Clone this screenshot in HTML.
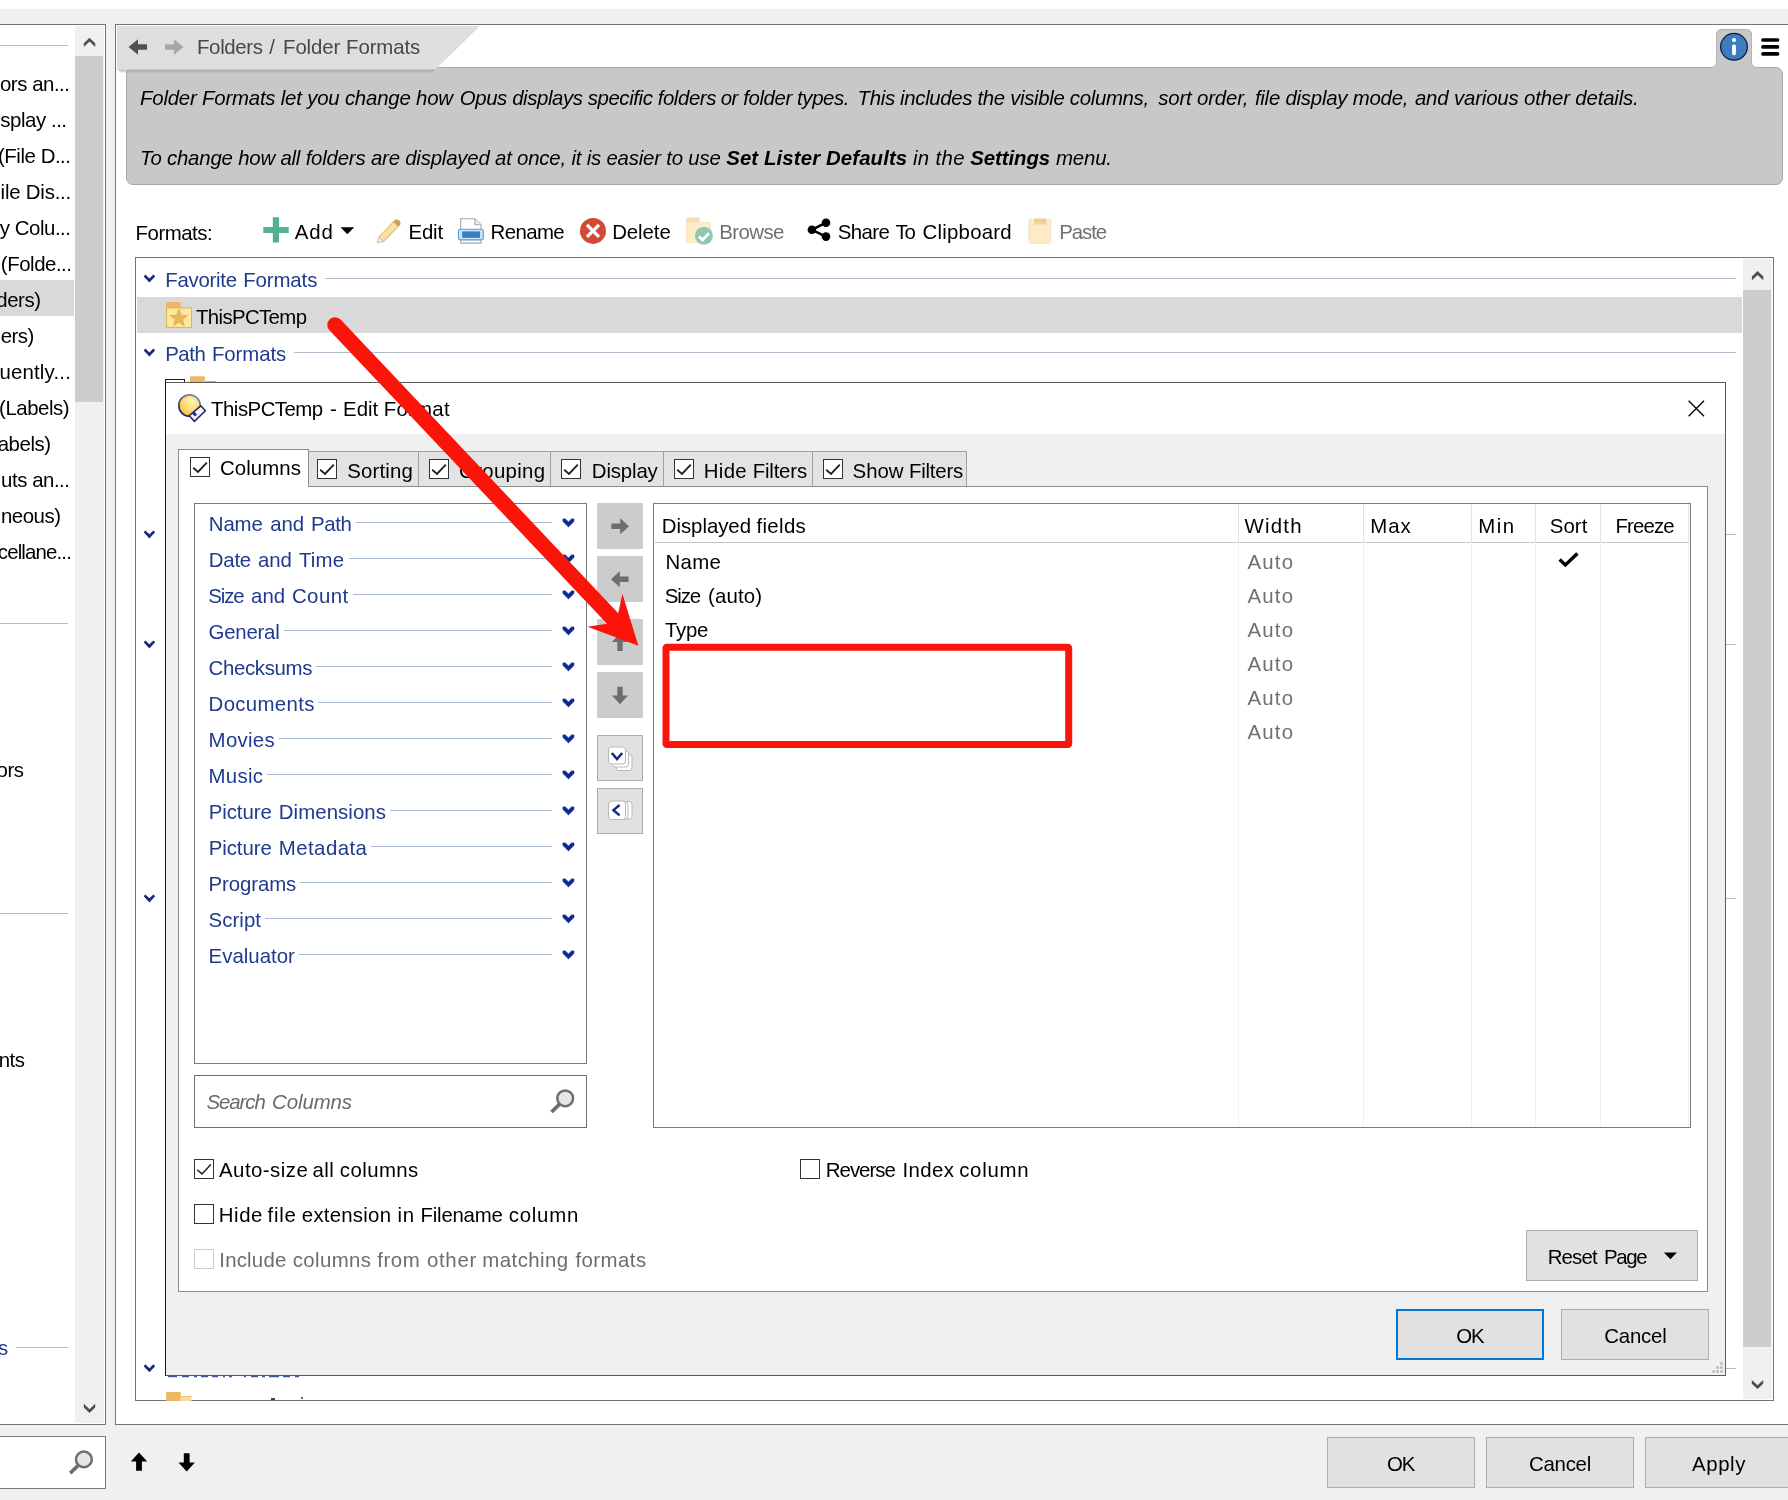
<!DOCTYPE html>
<html><head><meta charset="utf-8"><title>Folder Formats</title>
<style>
html,body{margin:0;padding:0;}
html{overflow:hidden;width:1788px;height:1500px;}
body{width:1788px;height:1500px;overflow:hidden;position:relative;background:#f0f0f0;font-family:"Liberation Sans",sans-serif;}
div,svg,span.t{position:absolute;box-sizing:border-box;}
span.t{white-space:pre;}
</style></head><body>
<div id="root" style="left:0;top:0;width:1788px;height:1500px;overflow:hidden;">
<div style="left:0px;top:0px;width:1788px;height:9px;background:#ffffff;"></div>
<div style="left:-2px;top:24px;width:108px;height:1401px;background:#ffffff;border:1px solid #747474;"></div>
<div style="left:75px;top:26px;width:29px;height:1397px;background:#f0f0f0;"></div>
<div style="left:75px;top:56px;width:28px;height:346px;background:#cdcdcd;"></div>
<div style="left:0px;top:280px;width:74px;height:36px;background:#d9d9d9;"></div>
<div style="left:0px;top:45px;width:68px;height:1px;background:#b4bccf;"></div>
<div style="left:0px;top:623px;width:68px;height:1px;background:#b4bccf;"></div>
<div style="left:0px;top:913px;width:68px;height:1px;background:#b4bccf;"></div>
<div style="left:16px;top:1347px;width:52px;height:1px;background:#b4bccf;"></div>
<svg style="left:75px;top:25px;" width="29" height="1399" viewBox="0 0 29 1399"><polygon points="14.50,12.80 20.20,18.20 20.20,22.00 14.50,16.60 8.80,22.00 8.80,18.20" fill="#4d4d4d"/><polygon points="14.50,1388.00 20.20,1382.60 20.20,1378.80 14.50,1384.20 8.80,1378.80 8.80,1382.60" fill="#4d4d4d"/></svg>
<div style="left:-2px;top:1436px;width:108px;height:53px;background:#ffffff;border:1px solid #7a7a7a;"></div>
<svg style="left:60px;top:1445px;" width="40" height="36" viewBox="0 0 40 36"><circle cx="23.9" cy="14.4" r="7.9" fill="#e6e6e6" stroke="#6e6e6e" stroke-width="2.5"/><path d="M18.1 20.5 L10.2 28.1" stroke="#6e6e6e" stroke-width="3.7"/></svg>
<div style="left:115px;top:24px;width:1700px;height:1401px;background:#ffffff;border:1px solid #747474;"></div>
<div style="left:126px;top:67px;width:1657px;height:118px;background:#c8c8c8;border:1px solid #a8a8a8;border-radius:7px;"></div>
<svg style="left:1700px;top:26px;" width="70" height="46" viewBox="0 0 70 46"><path d="M10.5 42 Q16 41.8 16 36.5 L16 9 Q16 3 22 3 L46 3 Q52 3 52 9 L52 36.5 Q52 41.8 57.5 42 L60 45 L8 45 Z" fill="#c8c8c8"/><path d="M10.5 41.5 Q16.5 41.6 16.5 36 L16.5 9 Q16.5 3.5 22 3.5 L46 3.5 Q51.5 3.5 51.5 9 L51.5 36 Q51.5 41.6 57.5 41.5" fill="none" stroke="#b4b4b4" stroke-width="1"/><circle cx="34" cy="20.8" r="13.4" fill="#3e7dbd" stroke="#0b1b3a" stroke-width="1.2"/><circle cx="34" cy="14" r="2.1" fill="#fff"/><rect x="32.1" y="18.6" width="3.8" height="10.6" rx="1.6" fill="#fff"/></svg>
<svg style="left:116px;top:25px;" width="380" height="52" viewBox="0 0 380 52"><defs><linearGradient id="tsh" x1="0" y1="0" x2="0" y2="1"><stop offset="0" stop-color="#9a9a9a" stop-opacity="0.75"/><stop offset="1" stop-color="#9a9a9a" stop-opacity="0"/></linearGradient></defs><polygon points="1,44.5 319.5,44.5 316,48.5 6,48.5" fill="url(#tsh)"/><polygon points="1,1 364,1 319.5,44.5 1,44.5" fill="#dedede"/><path d="M12.5 22 L22 14.2 L22 19.2 L31 19.2 L31 24.8 L22 24.8 L22 29.8 Z" fill="#505050"/><path d="M67.5 22 L58 14.2 L58 19.2 L49 19.2 L49 24.8 L58 24.8 L58 29.8 Z" fill="#a6a6a6"/></svg>
<svg style="left:1758px;top:34px;" width="26" height="26" viewBox="0 0 26 26"><g stroke="#000" stroke-width="3.7" stroke-linecap="round"><path d="M5 6 H19.5"/><path d="M5 12.9 H19.5"/><path d="M5 19.9 H19.5"/></g></svg>
<svg style="left:262px;top:216px;" width="28" height="28" viewBox="0 0 28 28"><path d="M10.8 1.3 H17 V10.9 H26.7 V16.9 H17 V26.6 H10.8 V16.9 H1.3 V10.9 H10.8 Z" fill="#56b08e"/></svg>
<svg style="left:338px;top:224px;" width="20" height="14" viewBox="0 0 20 14"><path d="M2.5 3.2 H16.2 L9.35 10.3 Z" fill="#000"/></svg>
<svg style="left:374px;top:217px;" width="30" height="28" viewBox="0 0 30 28"><path d="M4.9 20.1 L21.3 3 L26 7.4 L9.6 24.5 Z" fill="#f9e4a8" stroke="#dfbf7c" stroke-width="1.1" stroke-linejoin="round"/><path d="M8 17 L22.5 1.9 M11.5 21.5 L26.5 6" stroke="#e9cc8a" stroke-width="0.9" fill="none"/><path d="M19.4 5 L21.3 3 Q23.6 1.6 25.4 3.6 Q27.4 5.4 26 7.4 L24.1 9.4 Z" fill="#c9a24e"/><path d="M4.9 20.1 L9.6 24.5 L3.2 25.6 Z" fill="#f4f4f4" stroke="#cdb78e" stroke-width="0.9" stroke-linejoin="round"/></svg>
<svg style="left:456px;top:216px;" width="30" height="30" viewBox="0 0 30 30"><path d="M4.7 2.7 H18.9 L25 8.8 V27.1 H4.7 Z" fill="#ffffff" stroke="#a6a6a6" stroke-width="1.1"/><path d="M18.9 2.7 V8.8 H25" fill="#ececec" stroke="#a6a6a6" stroke-width="1.1"/><rect x="2.5" y="13.2" width="24.8" height="10.7" rx="1.8" fill="#c6e4fb" stroke="#5b9bd5" stroke-width="1.1"/><rect x="6.2" y="15.4" width="17.8" height="6.4" fill="#3a7cc0"/></svg>
<svg style="left:578px;top:216px;" width="30" height="30" viewBox="0 0 30 30"><circle cx="15" cy="14.9" r="13" fill="#d24a34"/><path d="M9 8.9 L21 20.9 M21 8.9 L9 20.9" stroke="#fff" stroke-width="3.3"/></svg>
<svg style="left:684px;top:216px;" width="32" height="30" viewBox="0 0 32 30"><path d="M2.4 1.4 H15.6 V6.5 H2.4 Z" fill="#f9deb0"/><rect x="2.4" y="6.3" width="23.9" height="20.1" fill="#fdeec8" stroke="#f5e2b8" stroke-width="0.8"/><circle cx="19.9" cy="19.7" r="9" fill="#8cc9b0"/><path d="M15 20.5 L18.4 23.9 L25 17.2" fill="none" stroke="#fff" stroke-width="2.8"/></svg>
<svg style="left:804px;top:216px;" width="30" height="30" viewBox="0 0 30 30"><g fill="#000"><circle cx="22" cy="6.7" r="4.3"/><circle cx="7.9" cy="13.8" r="4.3"/><circle cx="22" cy="20.6" r="4.3"/></g><path d="M22 6.7 L7.9 13.8 L22 20.6" fill="none" stroke="#000" stroke-width="2.6"/></svg>
<svg style="left:1026px;top:216px;" width="30" height="30" viewBox="0 0 30 30"><rect x="2.9" y="3.4" width="21.9" height="23.8" rx="2" fill="#fdebc8" stroke="#f3dfb6" stroke-width="0.9"/><rect x="8" y="2.4" width="12.2" height="6.1" fill="#f0d4a0"/><rect x="8.8" y="3.8" width="10.6" height="1" fill="#e4c48c"/></svg>
<div style="left:135px;top:257px;width:1639px;height:1144px;background:#ffffff;border:1px solid #747474;"></div>
<div style="left:1743px;top:259px;width:29px;height:1140px;background:#f0f0f0;"></div>
<div style="left:1743px;top:290px;width:28px;height:1057px;background:#cdcdcd;"></div>
<svg style="left:1743px;top:258px;" width="30" height="1142" viewBox="0 0 30 1142"><polygon points="14.60,13.10 20.30,18.50 20.30,22.30 14.60,16.90 8.90,22.30 8.90,18.50" fill="#4d4d4d"/><polygon points="14.50,1131.10 20.20,1125.70 20.20,1121.90 14.50,1127.30 8.80,1121.90 8.80,1125.70" fill="#4d4d4d"/></svg>
<div style="left:325px;top:278px;width:1411px;height:1px;background:#b4bccf;"></div>
<div style="left:294px;top:352px;width:1442px;height:1px;background:#b4bccf;"></div>
<div style="left:137px;top:297px;width:1605px;height:36px;background:#d9d9d9;"></div>
<div style="left:300px;top:534px;width:1436px;height:1px;background:#b4bccf;"></div>
<div style="left:300px;top:644px;width:1436px;height:1px;background:#b4bccf;"></div>
<div style="left:300px;top:898px;width:1436px;height:1px;background:#b4bccf;"></div>
<div style="left:300px;top:1368px;width:1436px;height:1px;background:#b4bccf;"></div>
<svg style="left:0px;top:0px;" width="400" height="1500" viewBox="0 0 400 1500"><polygon points="145.40,274.50 149.40,278.40 153.40,274.50 155.10,276.40 149.40,282.60 143.70,276.40" fill="#18287f"/><polygon points="145.40,348.50 149.40,352.40 153.40,348.50 155.10,350.40 149.40,356.60 143.70,350.40" fill="#18287f"/><polygon points="145.40,530.45 149.40,534.35 153.40,530.45 155.10,532.35 149.40,538.55 143.70,532.35" fill="#18287f"/><polygon points="145.40,640.45 149.40,644.35 153.40,640.45 155.10,642.35 149.40,648.55 143.70,642.35" fill="#18287f"/><polygon points="145.40,894.45 149.40,898.35 153.40,894.45 155.10,896.35 149.40,902.55 143.70,896.35" fill="#18287f"/><polygon points="145.40,1364.25 149.40,1368.15 153.40,1364.25 155.10,1366.15 149.40,1372.35 143.70,1366.15" fill="#18287f"/></svg>
<svg style="left:165px;top:301px;" width="28" height="28" viewBox="0 0 28 28"><path d="M1.1 2.3 Q1.1 1.1 2.3 1.1 H14.6 Q15.8 1.1 15.8 2.3 V7 H1.1 Z" fill="#ecb866"/><rect x="1.6" y="6.9" width="24.9" height="19.5" fill="#fee8a0" stroke="#e2b352" stroke-width="1"/><polygon points="13.90,8.20 16.13,14.23 22.55,14.49 17.51,18.47 19.25,24.66 13.90,21.10 8.55,24.66 10.29,18.47 5.25,14.49 11.67,14.23" fill="#e8b860" stroke="#d6a648" stroke-width="0.7"/></svg>
<div style="left:165px;top:379px;width:20px;height:10px;background:#ffffff;border:1px solid #1a1a1a;"></div>
<svg style="left:189px;top:375px;" width="30" height="10" viewBox="0 0 30 10"><rect x="1" y="1.2" width="14.8" height="8" rx="0.8" fill="#ecb866"/><rect x="15.8" y="6" width="11.2" height="1.2" fill="#d4ae6a"/></svg>
<svg style="left:165px;top:1390px;" width="30" height="11" viewBox="0 0 30 11"><rect x="1.2" y="2" width="14.5" height="9" fill="#ecb75e"/><rect x="15.5" y="6.2" width="11" height="1.3" fill="#ecb75e"/><rect x="15.5" y="7.5" width="11" height="3.5" fill="#f7dca4"/></svg>
<svg style="left:165px;top:1375px;" width="150" height="5" viewBox="0 0 150 5"><g fill="#1f3a8f" opacity="0.85" transform="translate(0 0.3) scale(1 0.65)"><rect x="3" y="1" width="9" height="2"/><rect x="17" y="1" width="7" height="2"/><rect x="29" y="1" width="3" height="2"/><rect x="36" y="1" width="7" height="2"/><rect x="47" y="1" width="6" height="2"/><rect x="58" y="1" width="2" height="2"/><rect x="64" y="1" width="3" height="2"/><rect x="79" y="1" width="2" height="2"/><rect x="86" y="1" width="7" height="2"/><rect x="97" y="1" width="3" height="2"/><rect x="104" y="1" width="10" height="2"/><rect x="118" y="1" width="7" height="2"/><rect x="130" y="1" width="4" height="2"/></g></svg>
<div style="left:271px;top:1398px;width:4px;height:1.5px;background:#444;"></div>
<div style="left:301px;top:1397px;width:2px;height:1.5px;background:#666;"></div>
<div style="left:165px;top:382px;width:1561px;height:994px;background:#f0f0f0;border:1px solid #5a5a5a;border-left-color:#141414;"></div>
<div style="left:166px;top:383px;width:1559px;height:51px;background:#ffffff;"></div>
<svg style="left:1684px;top:396px;" width="26" height="26" viewBox="0 0 26 26"><path d="M4.6 4.8 L20 20.2 M20 4.8 L4.6 20.2" stroke="#000" stroke-width="1.3" fill="none"/></svg>
<svg style="left:174px;top:390px;" width="36" height="36" viewBox="0 0 36 36"><defs><radialGradient id="yg" cx="0.62" cy="0.3" r="0.85"><stop offset="0" stop-color="#fef3b4"/><stop offset="0.5" stop-color="#fbdc72"/><stop offset="1" stop-color="#f4b21c"/></radialGradient><linearGradient id="og" x1="0.8" y1="0" x2="0.2" y2="1"><stop offset="0" stop-color="#8a8ab4"/><stop offset="1" stop-color="#23235f"/></linearGradient></defs><circle cx="15.5" cy="15.5" r="10.7" fill="url(#yg)" stroke="url(#og)" stroke-width="1.7"/><polygon points="26.8,15.8 31.4,20.7 20.4,31.4 15.3,25.7" fill="#f7f7ff" stroke="#2a2a6a" stroke-width="1.6" stroke-linejoin="round"/><path d="M19.2 22.6 L22 25.5" stroke="#2828a0" stroke-width="3"/></svg>
<div style="left:308px;top:451px;width:111px;height:36px;background:#e3e3e3;border:1px solid #a0a0a0;"></div>
<div style="left:418px;top:451px;width:133px;height:36px;background:#e3e3e3;border:1px solid #a0a0a0;"></div>
<div style="left:550px;top:451px;width:114px;height:36px;background:#e3e3e3;border:1px solid #a0a0a0;"></div>
<div style="left:663px;top:451px;width:150px;height:36px;background:#e3e3e3;border:1px solid #a0a0a0;"></div>
<div style="left:812px;top:451px;width:155px;height:36px;background:#e3e3e3;border:1px solid #a0a0a0;"></div>
<div style="left:178px;top:486px;width:1530px;height:806px;background:#ffffff;border:1px solid #8c8c8c;"></div>
<div style="left:178px;top:449px;width:131px;height:38px;background:#ffffff;border:1px solid #8c8c8c;border-bottom:none;"></div>
<svg style="left:190px;top:457px;" width="20" height="20" viewBox="0 0 20 20"><rect x="0.5" y="0.5" width="19" height="19" fill="#fff" stroke="#333333" stroke-width="1"/><path d="M3.2 10.7 L8 14.9 L16.8 5.6" fill="none" stroke="#222" stroke-width="1.9"/></svg>
<svg style="left:317px;top:459px;" width="20" height="20" viewBox="0 0 20 20"><rect x="0.5" y="0.5" width="19" height="19" fill="#fff" stroke="#333333" stroke-width="1"/><path d="M3.2 10.7 L8 14.9 L16.8 5.6" fill="none" stroke="#222" stroke-width="1.9"/></svg>
<svg style="left:429px;top:459px;" width="20" height="20" viewBox="0 0 20 20"><rect x="0.5" y="0.5" width="19" height="19" fill="#fff" stroke="#333333" stroke-width="1"/><path d="M3.2 10.7 L8 14.9 L16.8 5.6" fill="none" stroke="#222" stroke-width="1.9"/></svg>
<svg style="left:561px;top:459px;" width="20" height="20" viewBox="0 0 20 20"><rect x="0.5" y="0.5" width="19" height="19" fill="#fff" stroke="#333333" stroke-width="1"/><path d="M3.2 10.7 L8 14.9 L16.8 5.6" fill="none" stroke="#222" stroke-width="1.9"/></svg>
<svg style="left:674px;top:459px;" width="20" height="20" viewBox="0 0 20 20"><rect x="0.5" y="0.5" width="19" height="19" fill="#fff" stroke="#333333" stroke-width="1"/><path d="M3.2 10.7 L8 14.9 L16.8 5.6" fill="none" stroke="#222" stroke-width="1.9"/></svg>
<svg style="left:823px;top:459px;" width="20" height="20" viewBox="0 0 20 20"><rect x="0.5" y="0.5" width="19" height="19" fill="#fff" stroke="#333333" stroke-width="1"/><path d="M3.2 10.7 L8 14.9 L16.8 5.6" fill="none" stroke="#222" stroke-width="1.9"/></svg>
<div style="left:194px;top:503px;width:393px;height:561px;background:#ffffff;border:1px solid #7a7a7a;"></div>
<div style="left:356px;top:522px;width:196px;height:1px;background:#a9b8d4;"></div>
<div style="left:349px;top:558px;width:203px;height:1px;background:#a9b8d4;"></div>
<div style="left:353px;top:594px;width:199px;height:1px;background:#a9b8d4;"></div>
<div style="left:284px;top:630px;width:268px;height:1px;background:#a9b8d4;"></div>
<div style="left:316px;top:666px;width:236px;height:1px;background:#a9b8d4;"></div>
<div style="left:318px;top:702px;width:234px;height:1px;background:#a9b8d4;"></div>
<div style="left:279px;top:738px;width:273px;height:1px;background:#a9b8d4;"></div>
<div style="left:267px;top:774px;width:285px;height:1px;background:#a9b8d4;"></div>
<div style="left:390px;top:810px;width:162px;height:1px;background:#a9b8d4;"></div>
<div style="left:371px;top:846px;width:181px;height:1px;background:#a9b8d4;"></div>
<div style="left:300px;top:882px;width:252px;height:1px;background:#a9b8d4;"></div>
<div style="left:265px;top:918px;width:287px;height:1px;background:#a9b8d4;"></div>
<div style="left:299px;top:954px;width:253px;height:1px;background:#a9b8d4;"></div>
<svg style="left:0px;top:0px;" width="600" height="1000" viewBox="0 0 600 1000"><polygon points="562.90,518.90 565.40,518.90 568.45,521.90 571.50,518.90 574.00,518.90 574.00,521.40 568.45,526.90 562.90,521.40" fill="#10299a" stroke="#0a1c78" stroke-width="0.5"/><polygon points="562.90,554.90 565.40,554.90 568.45,557.90 571.50,554.90 574.00,554.90 574.00,557.40 568.45,562.90 562.90,557.40" fill="#10299a" stroke="#0a1c78" stroke-width="0.5"/><polygon points="562.90,590.90 565.40,590.90 568.45,593.90 571.50,590.90 574.00,590.90 574.00,593.40 568.45,598.90 562.90,593.40" fill="#10299a" stroke="#0a1c78" stroke-width="0.5"/><polygon points="562.90,626.90 565.40,626.90 568.45,629.90 571.50,626.90 574.00,626.90 574.00,629.40 568.45,634.90 562.90,629.40" fill="#10299a" stroke="#0a1c78" stroke-width="0.5"/><polygon points="562.90,662.90 565.40,662.90 568.45,665.90 571.50,662.90 574.00,662.90 574.00,665.40 568.45,670.90 562.90,665.40" fill="#10299a" stroke="#0a1c78" stroke-width="0.5"/><polygon points="562.90,698.90 565.40,698.90 568.45,701.90 571.50,698.90 574.00,698.90 574.00,701.40 568.45,706.90 562.90,701.40" fill="#10299a" stroke="#0a1c78" stroke-width="0.5"/><polygon points="562.90,734.90 565.40,734.90 568.45,737.90 571.50,734.90 574.00,734.90 574.00,737.40 568.45,742.90 562.90,737.40" fill="#10299a" stroke="#0a1c78" stroke-width="0.5"/><polygon points="562.90,770.90 565.40,770.90 568.45,773.90 571.50,770.90 574.00,770.90 574.00,773.40 568.45,778.90 562.90,773.40" fill="#10299a" stroke="#0a1c78" stroke-width="0.5"/><polygon points="562.90,806.90 565.40,806.90 568.45,809.90 571.50,806.90 574.00,806.90 574.00,809.40 568.45,814.90 562.90,809.40" fill="#10299a" stroke="#0a1c78" stroke-width="0.5"/><polygon points="562.90,842.90 565.40,842.90 568.45,845.90 571.50,842.90 574.00,842.90 574.00,845.40 568.45,850.90 562.90,845.40" fill="#10299a" stroke="#0a1c78" stroke-width="0.5"/><polygon points="562.90,878.90 565.40,878.90 568.45,881.90 571.50,878.90 574.00,878.90 574.00,881.40 568.45,886.90 562.90,881.40" fill="#10299a" stroke="#0a1c78" stroke-width="0.5"/><polygon points="562.90,914.90 565.40,914.90 568.45,917.90 571.50,914.90 574.00,914.90 574.00,917.40 568.45,922.90 562.90,917.40" fill="#10299a" stroke="#0a1c78" stroke-width="0.5"/><polygon points="562.90,950.90 565.40,950.90 568.45,953.90 571.50,950.90 574.00,950.90 574.00,953.40 568.45,958.90 562.90,953.40" fill="#10299a" stroke="#0a1c78" stroke-width="0.5"/></svg>
<div style="left:597px;top:503px;width:46px;height:46px;background:#cccccc;"></div>
<svg style="left:597px;top:503px;" width="46" height="46" viewBox="0 0 46 46"><g transform="translate(23 23.3) rotate(0)"><path d="M-8.6 -2.7 H0.2 V-8 L9 0 L0.2 8 V2.7 H-8.6 Z" fill="#6d6d6d"/></g></svg>
<div style="left:597px;top:556px;width:46px;height:46px;background:#cccccc;"></div>
<svg style="left:597px;top:556px;" width="46" height="46" viewBox="0 0 46 46"><g transform="translate(23 23.3) rotate(180)"><path d="M-8.6 -2.7 H0.2 V-8 L9 0 L0.2 8 V2.7 H-8.6 Z" fill="#6d6d6d"/></g></svg>
<div style="left:597px;top:619px;width:46px;height:46px;background:#cccccc;"></div>
<svg style="left:597px;top:619px;" width="46" height="46" viewBox="0 0 46 46"><g transform="translate(23 23.3) rotate(270)"><path d="M-8.6 -2.7 H0.2 V-8 L9 0 L0.2 8 V2.7 H-8.6 Z" fill="#6d6d6d"/></g></svg>
<div style="left:597px;top:672px;width:46px;height:46px;background:#cccccc;"></div>
<svg style="left:597px;top:672px;" width="46" height="46" viewBox="0 0 46 46"><g transform="translate(23 23.3) rotate(90)"><path d="M-8.6 -2.7 H0.2 V-8 L9 0 L0.2 8 V2.7 H-8.6 Z" fill="#6d6d6d"/></g></svg>
<div style="left:597px;top:735px;width:46px;height:46px;background:#e1e1e1;border:1px solid #adadad;"></div>
<div style="left:597px;top:788px;width:46px;height:46px;background:#e1e1e1;border:1px solid #adadad;"></div>
<svg style="left:597px;top:735px;" width="46" height="46" viewBox="0 0 46 46"><g fill="#fff" stroke="#b8b8b8" stroke-width="1"><rect x="19" y="19.5" width="16" height="16" rx="2.5"/><rect x="15.5" y="16" width="16" height="16" rx="2.5"/><rect x="11.5" y="12" width="17" height="17" rx="3"/></g><path d="M14.80 18.00 L20.00 24.00 L25.20 18.00" fill="none" stroke="#14278a" stroke-width="2.5" stroke-linejoin="miter"/></svg>
<svg style="left:597px;top:788px;" width="46" height="46" viewBox="0 0 46 46"><g fill="#fff" stroke="#b8b8b8" stroke-width="1"><rect x="24" y="13.5" width="11" height="17.5" rx="2.5"/><rect x="20" y="13.5" width="11" height="17.5" rx="2.5"/><rect x="11.5" y="13" width="17" height="18.5" rx="3"/></g><path d="M22.6 17 L16.4 22.2 L22.6 27.4" fill="none" stroke="#14278a" stroke-width="2.4"/></svg>
<div style="left:653px;top:503px;width:1038px;height:625px;background:#ffffff;border:1px solid #7a7a7a;"></div>
<div style="left:655px;top:542px;width:1034px;height:1px;background:#c4c4c4;"></div>
<div style="left:1238px;top:504px;width:1px;height:623px;background:#eef1f4;"></div>
<div style="left:1238px;top:504px;width:1px;height:38px;background:#e2e2e2;"></div>
<div style="left:1363px;top:504px;width:1px;height:623px;background:#eef1f4;"></div>
<div style="left:1363px;top:504px;width:1px;height:38px;background:#e2e2e2;"></div>
<div style="left:1471px;top:504px;width:1px;height:623px;background:#eef1f4;"></div>
<div style="left:1471px;top:504px;width:1px;height:38px;background:#e2e2e2;"></div>
<div style="left:1535px;top:504px;width:1px;height:623px;background:#eef1f4;"></div>
<div style="left:1535px;top:504px;width:1px;height:38px;background:#e2e2e2;"></div>
<div style="left:1600px;top:504px;width:1px;height:623px;background:#eef1f4;"></div>
<div style="left:1600px;top:504px;width:1px;height:38px;background:#e2e2e2;"></div>
<div style="left:1688px;top:504px;width:1px;height:623px;background:#eef1f4;"></div>
<div style="left:1688px;top:504px;width:1px;height:38px;background:#e2e2e2;"></div>
<svg style="left:1555px;top:549px;" width="28" height="22" viewBox="0 0 28 22"><path d="M4.6 10.6 L10.4 16 L22.4 4.6" fill="none" stroke="#000" stroke-width="3.4"/></svg>
<div style="left:194px;top:1075px;width:393px;height:53px;background:#ffffff;border:1px solid #707070;"></div>
<svg style="left:545px;top:1084px;" width="36" height="36" viewBox="0 0 36 36"><circle cx="20.2" cy="14.3" r="7.9" fill="#e6e6e6" stroke="#6e6e6e" stroke-width="2.5"/><path d="M14.4 20.4 L6.5 28" stroke="#6e6e6e" stroke-width="3.7"/></svg>
<svg style="left:194px;top:1159px;" width="20" height="20" viewBox="0 0 20 20"><rect x="0.5" y="0.5" width="19" height="19" fill="#fff" stroke="#333333" stroke-width="1"/><path d="M3.2 10.7 L8 14.9 L16.8 5.6" fill="none" stroke="#222" stroke-width="1.5"/></svg>
<svg style="left:194px;top:1204px;" width="20" height="20" viewBox="0 0 20 20"><rect x="0.5" y="0.5" width="19" height="19" fill="#fff" stroke="#333333" stroke-width="1"/></svg>
<svg style="left:194px;top:1249px;" width="20" height="20" viewBox="0 0 20 20"><rect x="0.5" y="0.5" width="19" height="19" fill="#fff" stroke="#cccccc" stroke-width="1"/></svg>
<svg style="left:800px;top:1159px;" width="20" height="20" viewBox="0 0 20 20"><rect x="0.5" y="0.5" width="19" height="19" fill="#fff" stroke="#333333" stroke-width="1"/></svg>
<div style="left:1526px;top:1230px;width:172px;height:51px;background:#e1e1e1;border:1px solid #adadad;"></div>
<svg style="left:1660px;top:1250px;" width="22" height="12" viewBox="0 0 22 12"><path d="M3.9 2.5 H16.9 L10.4 9.2 Z" fill="#000"/></svg>
<div style="left:1396px;top:1309px;width:148px;height:51px;background:#e1e1e1;border:2px solid #0078d7;"></div>
<div style="left:1561px;top:1309px;width:148px;height:51px;background:#e1e1e1;border:1px solid #adadad;"></div>
<svg style="left:1712px;top:1362px;" width="14" height="14" viewBox="0 0 14 14"><g fill="#b4b4b4"><rect x="8.3" y="0.3" width="2.5" height="2.5"/><rect x="4.3" y="4.3" width="2.5" height="2.5"/><rect x="8.3" y="4.3" width="2.5" height="2.5"/><rect x="0.3" y="8.3" width="2.5" height="2.5"/><rect x="4.3" y="8.3" width="2.5" height="2.5"/><rect x="8.3" y="8.3" width="2.5" height="2.5"/></g></svg>
<div style="left:1327px;top:1437px;width:148px;height:51px;background:#e1e1e1;border:1px solid #adadad;"></div>
<div style="left:1486px;top:1437px;width:148px;height:51px;background:#e1e1e1;border:1px solid #adadad;"></div>
<div style="left:1645px;top:1437px;width:160px;height:51px;background:#e1e1e1;border:1px solid #adadad;"></div>
<svg style="left:120px;top:1445px;" width="90" height="36" viewBox="0 0 90 36"><g transform="translate(19 16.8) scale(1 -1)"><path d="M-2.9 -9 H2.9 V0.4 H8.2 L0 9.2 L-8.2 0.4 H-2.9 Z" fill="#000"/></g><g transform="translate(66.7 17.2) scale(1 1)"><path d="M-2.9 -9 H2.9 V0.4 H8.2 L0 9.2 L-8.2 0.4 H-2.9 Z" fill="#000"/></g></svg>
<div style="left:0;top:0;width:1788px;height:1500px;will-change:transform;">
<span class="t" style="top:71px;line-height:27px;color:#000;font-size:20.4px;letter-spacing:-0.450px;right:1718.45px;">ors an...</span>
<span class="t" style="top:107px;line-height:27px;color:#000;font-size:20.4px;letter-spacing:-0.450px;right:1721.45px;">splay ...</span>
<span class="t" style="top:143px;line-height:27px;color:#000;font-size:20.4px;letter-spacing:-0.450px;right:1717.45px;">(File D...</span>
<span class="t" style="top:179px;line-height:27px;color:#000;font-size:20.4px;letter-spacing:-0.213px;right:1717.00px;">ile Dis...</span>
<span class="t" style="top:215px;line-height:27px;color:#000;font-size:20.4px;letter-spacing:-0.450px;right:1717.45px;">y Colu...</span>
<span class="t" style="top:251px;line-height:27px;color:#000;font-size:20.4px;letter-spacing:-0.450px;right:1716.45px;">(Folde...</span>
<span class="t" style="top:287px;line-height:27px;color:#000;font-size:20.4px;letter-spacing:-0.450px;right:1747.45px;">ders)</span>
<span class="t" style="top:323px;line-height:27px;color:#000;font-size:20.4px;letter-spacing:-0.450px;right:1754.05px;">ers)</span>
<span class="t" style="top:359px;line-height:27px;color:#000;font-size:20.4px;letter-spacing:0.187px;right:1717.00px;">uently...</span>
<span class="t" style="top:395px;line-height:27px;color:#000;font-size:20.4px;letter-spacing:-0.450px;right:1718.85px;">(Labels)</span>
<span class="t" style="top:431px;line-height:27px;color:#000;font-size:20.4px;letter-spacing:-0.450px;right:1737.45px;">abels)</span>
<span class="t" style="top:467px;line-height:27px;color:#000;font-size:20.4px;letter-spacing:-0.450px;right:1718.45px;">uts an...</span>
<span class="t" style="top:503px;line-height:27px;color:#000;font-size:20.4px;letter-spacing:-0.450px;right:1727.45px;">neous)</span>
<span class="t" style="top:539px;line-height:27px;color:#000;font-size:20.4px;letter-spacing:-0.847px;right:1717.00px;">cellane...</span>
<span class="t" style="top:757px;line-height:27px;color:#000;font-size:20.4px;letter-spacing:-0.450px;right:1764.45px;">ors</span>
<span class="t" style="top:1047px;line-height:27px;color:#000;font-size:20.4px;letter-spacing:-0.450px;right:1763.45px;">nts</span>
<span class="t" style="top:1335px;line-height:27px;color:#1f3a8f;font-size:20.4px;right:1779.80px;">s</span>
<span class="t" style="top:34px;line-height:27px;color:#484848;font-size:20.4px;letter-spacing:-0.333px;left:197.00px;">Folders</span>
<span class="t" style="top:34px;line-height:27px;color:#484848;font-size:20.4px;left:269.20px;">/</span>
<span class="t" style="top:34px;line-height:27px;color:#484848;font-size:20.4px;letter-spacing:-0.139px;left:283.10px;">Folder</span>
<span class="t" style="top:34px;line-height:27px;color:#484848;font-size:20.4px;letter-spacing:-0.080px;left:346.00px;">Formats</span>
<span class="t" style="top:85px;line-height:27px;color:#000;font-size:20.4px;font-style:italic;letter-spacing:-0.207px;left:140.00px;">Folder Formats let you change how</span>
<span class="t" style="top:85px;line-height:27px;color:#000;font-size:20.4px;font-style:italic;letter-spacing:-0.414px;left:459.80px;">Opus displays specific folders</span>
<span class="t" style="top:85px;line-height:27px;color:#000;font-size:20.4px;font-style:italic;letter-spacing:-0.405px;left:720.70px;">or folder types.</span>
<span class="t" style="top:85px;line-height:27px;color:#000;font-size:20.4px;font-style:italic;letter-spacing:-0.337px;left:857.60px;">This includes the visible columns,</span>
<span class="t" style="top:85px;line-height:27px;color:#000;font-size:20.4px;font-style:italic;letter-spacing:-0.161px;left:1158.20px;">sort order,</span>
<span class="t" style="top:85px;line-height:27px;color:#000;font-size:20.4px;font-style:italic;letter-spacing:-0.232px;left:1254.90px;">file display mode,</span>
<span class="t" style="top:85px;line-height:27px;color:#000;font-size:20.4px;font-style:italic;letter-spacing:-0.158px;left:1414.90px;">and various other details.</span>
<span class="t" style="top:145px;line-height:27px;color:#000;font-size:20.4px;font-style:italic;letter-spacing:-0.202px;left:140.00px;">To change how all folders are displayed at once, it is easier to use</span>
<span class="t" style="top:145px;line-height:27px;color:#000;font-size:20.4px;font-style:italic;font-weight:bold;letter-spacing:0.109px;left:726.20px;">Set Lister Defaults</span>
<span class="t" style="top:145px;line-height:27px;color:#000;font-size:20.4px;font-style:italic;letter-spacing:0.322px;left:913.00px;">in the</span>
<span class="t" style="top:145px;line-height:27px;color:#000;font-size:20.4px;font-style:italic;font-weight:bold;letter-spacing:-0.062px;left:970.20px;">Settings</span>
<span class="t" style="top:145px;line-height:27px;color:#000;font-size:20.4px;font-style:italic;letter-spacing:-0.168px;left:1056.00px;">menu.</span>
<span class="t" style="top:220px;line-height:27px;color:#000;font-size:20.4px;letter-spacing:-0.491px;left:135.60px;">Formats:</span>
<span class="t" style="top:219px;line-height:27px;color:#000;font-size:20.4px;letter-spacing:0.859px;left:294.80px;">Add</span>
<span class="t" style="top:219px;line-height:27px;color:#000;font-size:20.4px;letter-spacing:-0.214px;left:408.60px;">Edit</span>
<span class="t" style="top:219px;line-height:27px;color:#000;font-size:20.4px;letter-spacing:-0.616px;left:490.60px;">Rename</span>
<span class="t" style="top:219px;line-height:27px;color:#000;font-size:20.4px;letter-spacing:-0.071px;left:612.20px;">Delete</span>
<span class="t" style="top:219px;line-height:27px;color:#707070;font-size:20.4px;letter-spacing:-0.560px;left:719.20px;">Browse</span>
<span class="t" style="top:219px;line-height:27px;color:#000;font-size:20.4px;letter-spacing:-0.580px;left:837.80px;">Share</span>
<span class="t" style="top:219px;line-height:27px;color:#000;font-size:20.4px;letter-spacing:-1.147px;left:895.40px;">To</span>
<span class="t" style="top:219px;line-height:27px;color:#000;font-size:20.4px;letter-spacing:0.215px;left:922.60px;">Clipboard</span>
<span class="t" style="top:219px;line-height:27px;color:#707070;font-size:20.4px;letter-spacing:-1.039px;left:1059.20px;">Paste</span>
<span class="t" style="top:267px;line-height:27px;color:#1f3a8f;font-size:20.4px;letter-spacing:-0.267px;left:165.20px;">Favorite</span>
<span class="t" style="top:267px;line-height:27px;color:#1f3a8f;font-size:20.4px;letter-spacing:-0.097px;left:243.20px;">Formats</span>
<span class="t" style="top:341px;line-height:27px;color:#1f3a8f;font-size:20.4px;letter-spacing:-0.451px;left:165.20px;">Path</span>
<span class="t" style="top:341px;line-height:27px;color:#1f3a8f;font-size:20.4px;letter-spacing:-0.097px;left:212.00px;">Formats</span>
<span class="t" style="top:304px;line-height:27px;color:#000;font-size:20.4px;letter-spacing:-0.635px;left:196.00px;">ThisPCTemp</span>
<span class="t" style="top:396px;line-height:27px;color:#000;font-size:20.4px;letter-spacing:-0.513px;left:211.10px;">ThisPCTemp</span>
<span class="t" style="top:396px;line-height:27px;color:#000;font-size:20.4px;left:330.00px;">-</span>
<span class="t" style="top:396px;line-height:27px;color:#000;font-size:20.4px;letter-spacing:0.020px;left:343.10px;">Edit</span>
<span class="t" style="top:396px;line-height:27px;color:#000;font-size:20.4px;letter-spacing:0.264px;left:383.70px;">Format</span>
<span class="t" style="top:455px;line-height:27px;color:#000;font-size:20.4px;letter-spacing:0.089px;left:220.00px;">Columns</span>
<span class="t" style="top:458px;line-height:27px;color:#000;font-size:20.4px;letter-spacing:0.165px;left:347.20px;">Sorting</span>
<span class="t" style="top:458px;line-height:27px;color:#000;font-size:20.4px;letter-spacing:0.301px;left:459.00px;">Grouping</span>
<span class="t" style="top:458px;line-height:27px;color:#000;font-size:20.4px;letter-spacing:-0.143px;left:591.80px;">Display</span>
<span class="t" style="top:458px;line-height:27px;color:#000;font-size:20.4px;letter-spacing:0.287px;left:703.80px;">Hide</span>
<span class="t" style="top:458px;line-height:27px;color:#000;font-size:20.4px;letter-spacing:-0.186px;left:752.70px;">Filters</span>
<span class="t" style="top:458px;line-height:27px;color:#000;font-size:20.4px;letter-spacing:-0.039px;left:852.60px;">Show</span>
<span class="t" style="top:458px;line-height:27px;color:#000;font-size:20.4px;letter-spacing:-0.203px;left:908.90px;">Filters</span>
<span class="t" style="top:511px;line-height:27px;color:#1f3a8f;font-size:20.4px;letter-spacing:-0.135px;left:208.80px;">Name</span>
<span class="t" style="top:511px;line-height:27px;color:#1f3a8f;font-size:20.4px;letter-spacing:-0.116px;left:270.20px;">and</span>
<span class="t" style="top:511px;line-height:27px;color:#1f3a8f;font-size:20.4px;letter-spacing:-0.384px;left:311.00px;">Path</span>
<span class="t" style="top:547px;line-height:27px;color:#1f3a8f;font-size:20.4px;letter-spacing:-0.226px;left:208.80px;">Date</span>
<span class="t" style="top:547px;line-height:27px;color:#1f3a8f;font-size:20.4px;letter-spacing:-0.116px;left:258.10px;">and</span>
<span class="t" style="top:547px;line-height:27px;color:#1f3a8f;font-size:20.4px;letter-spacing:0.179px;left:298.90px;">Time</span>
<span class="t" style="top:583px;line-height:27px;color:#1f3a8f;font-size:20.4px;letter-spacing:-1.124px;left:208.30px;">Size</span>
<span class="t" style="top:583px;line-height:27px;color:#1f3a8f;font-size:20.4px;letter-spacing:0.034px;left:251.10px;">and</span>
<span class="t" style="top:583px;line-height:27px;color:#1f3a8f;font-size:20.4px;letter-spacing:0.495px;left:291.90px;">Count</span>
<span class="t" style="top:619px;line-height:27px;color:#1f3a8f;font-size:20.4px;letter-spacing:-0.241px;left:208.60px;">General</span>
<span class="t" style="top:655px;line-height:27px;color:#1f3a8f;font-size:20.4px;letter-spacing:-0.339px;left:208.60px;">Checksums</span>
<span class="t" style="top:691px;line-height:27px;color:#1f3a8f;font-size:20.4px;letter-spacing:0.332px;left:208.60px;">Documents</span>
<span class="t" style="top:727px;line-height:27px;color:#1f3a8f;font-size:20.4px;letter-spacing:0.301px;left:208.60px;">Movies</span>
<span class="t" style="top:763px;line-height:27px;color:#1f3a8f;font-size:20.4px;letter-spacing:0.288px;left:208.60px;">Music</span>
<span class="t" style="top:799px;line-height:27px;color:#1f3a8f;font-size:20.4px;letter-spacing:-0.061px;left:208.70px;">Picture</span>
<span class="t" style="top:799px;line-height:27px;color:#1f3a8f;font-size:20.4px;letter-spacing:0.063px;left:278.80px;">Dimensions</span>
<span class="t" style="top:835px;line-height:27px;color:#1f3a8f;font-size:20.4px;letter-spacing:-0.061px;left:208.70px;">Picture</span>
<span class="t" style="top:835px;line-height:27px;color:#1f3a8f;font-size:20.4px;letter-spacing:0.438px;left:278.80px;">Metadata</span>
<span class="t" style="top:871px;line-height:27px;color:#1f3a8f;font-size:20.4px;letter-spacing:-0.099px;left:208.60px;">Programs</span>
<span class="t" style="top:907px;line-height:27px;color:#1f3a8f;font-size:20.4px;letter-spacing:0.055px;left:208.60px;">Script</span>
<span class="t" style="top:943px;line-height:27px;color:#1f3a8f;font-size:20.4px;letter-spacing:0.005px;left:208.60px;">Evaluator</span>
<span class="t" style="top:513px;line-height:27px;color:#000;font-size:20.4px;letter-spacing:-0.043px;left:661.80px;">Displayed</span>
<span class="t" style="top:513px;line-height:27px;color:#000;font-size:20.4px;letter-spacing:0.358px;left:756.40px;">fields</span>
<span class="t" style="top:513px;line-height:27px;color:#000;font-size:20.4px;letter-spacing:1.219px;left:1244.60px;">Width</span>
<span class="t" style="top:513px;line-height:27px;color:#000;font-size:20.4px;letter-spacing:1.034px;left:1370.20px;">Max</span>
<span class="t" style="top:513px;line-height:27px;color:#000;font-size:20.4px;letter-spacing:1.570px;left:1478.20px;">Min</span>
<span class="t" style="top:513px;line-height:27px;color:#000;font-size:20.4px;letter-spacing:0.065px;left:1549.80px;">Sort</span>
<span class="t" style="top:513px;line-height:27px;color:#000;font-size:20.4px;letter-spacing:-0.854px;left:1615.40px;">Freeze</span>
<span class="t" style="top:549px;line-height:27px;color:#000;font-size:20.4px;letter-spacing:0.265px;left:665.60px;">Name</span>
<span class="t" style="top:583px;line-height:27px;color:#000;font-size:20.4px;letter-spacing:-1.124px;left:664.80px;">Size</span>
<span class="t" style="top:583px;line-height:27px;color:#000;font-size:20.4px;letter-spacing:0.124px;left:708.10px;">(auto)</span>
<span class="t" style="top:617px;line-height:27px;color:#000;font-size:20.4px;letter-spacing:-0.273px;left:665.00px;">Type</span>
<span class="t" style="top:549px;line-height:27px;color:#707070;font-size:20.4px;letter-spacing:1.149px;left:1247.60px;">Auto</span>
<span class="t" style="top:583px;line-height:27px;color:#707070;font-size:20.4px;letter-spacing:1.149px;left:1247.60px;">Auto</span>
<span class="t" style="top:617px;line-height:27px;color:#707070;font-size:20.4px;letter-spacing:1.149px;left:1247.60px;">Auto</span>
<span class="t" style="top:651px;line-height:27px;color:#707070;font-size:20.4px;letter-spacing:1.149px;left:1247.60px;">Auto</span>
<span class="t" style="top:685px;line-height:27px;color:#707070;font-size:20.4px;letter-spacing:1.149px;left:1247.60px;">Auto</span>
<span class="t" style="top:719px;line-height:27px;color:#707070;font-size:20.4px;letter-spacing:1.149px;left:1247.60px;">Auto</span>
<span class="t" style="top:1089px;line-height:27px;color:#6a6a6a;font-size:20.4px;font-style:italic;letter-spacing:-1.022px;left:206.40px;">Search</span>
<span class="t" style="top:1089px;line-height:27px;color:#6a6a6a;font-size:20.4px;font-style:italic;letter-spacing:-0.095px;left:272.10px;">Columns</span>
<span class="t" style="top:1157px;line-height:27px;color:#000;font-size:20.4px;letter-spacing:0.475px;left:219.00px;">Auto-size</span>
<span class="t" style="top:1157px;line-height:27px;color:#000;font-size:20.4px;letter-spacing:0.497px;left:312.40px;">all</span>
<span class="t" style="top:1157px;line-height:27px;color:#000;font-size:20.4px;letter-spacing:0.427px;left:339.80px;">columns</span>
<span class="t" style="top:1202px;line-height:27px;color:#000;font-size:20.4px;letter-spacing:0.554px;left:218.80px;">Hide</span>
<span class="t" style="top:1202px;line-height:27px;color:#000;font-size:20.4px;letter-spacing:0.741px;left:267.60px;">file</span>
<span class="t" style="top:1202px;line-height:27px;color:#000;font-size:20.4px;letter-spacing:0.238px;left:301.80px;">extension</span>
<span class="t" style="top:1202px;line-height:27px;color:#000;font-size:20.4px;letter-spacing:0.825px;left:397.50px;">in</span>
<span class="t" style="top:1202px;line-height:27px;color:#000;font-size:20.4px;letter-spacing:-0.239px;left:420.60px;">Filename</span>
<span class="t" style="top:1202px;line-height:27px;color:#000;font-size:20.4px;letter-spacing:0.773px;left:508.70px;">column</span>
<span class="t" style="top:1247px;line-height:27px;color:#6d6d6d;font-size:20.4px;letter-spacing:0.206px;left:219.30px;">Include</span>
<span class="t" style="top:1247px;line-height:27px;color:#6d6d6d;font-size:20.4px;letter-spacing:0.360px;left:292.80px;">columns</span>
<span class="t" style="top:1247px;line-height:27px;color:#6d6d6d;font-size:20.4px;letter-spacing:0.534px;left:377.30px;">from</span>
<span class="t" style="top:1247px;line-height:27px;color:#6d6d6d;font-size:20.4px;letter-spacing:0.729px;left:426.90px;">other</span>
<span class="t" style="top:1247px;line-height:27px;color:#6d6d6d;font-size:20.4px;letter-spacing:0.450px;left:482.30px;">matching</span>
<span class="t" style="top:1247px;line-height:27px;color:#6d6d6d;font-size:20.4px;letter-spacing:0.469px;left:575.40px;">formats</span>
<span class="t" style="top:1157px;line-height:27px;color:#000;font-size:20.4px;letter-spacing:-0.990px;left:825.80px;">Reverse</span>
<span class="t" style="top:1157px;line-height:27px;color:#000;font-size:20.4px;letter-spacing:0.427px;left:902.40px;">Index</span>
<span class="t" style="top:1157px;line-height:27px;color:#000;font-size:20.4px;letter-spacing:0.733px;left:959.20px;">column</span>
<span class="t" style="top:1244px;line-height:27px;color:#000;font-size:20.4px;letter-spacing:-0.845px;left:1547.70px;">Reset</span>
<span class="t" style="top:1244px;line-height:27px;color:#000;font-size:20.4px;letter-spacing:-1.342px;left:1604.10px;">Page</span>
<span class="t" style="top:1323px;line-height:27px;color:#000;font-size:20.4px;letter-spacing:-1.069px;left:1456.20px;">OK</span>
<span class="t" style="top:1323px;line-height:27px;color:#000;font-size:20.4px;letter-spacing:-0.217px;left:1604.30px;">Cancel</span>
<span class="t" style="top:1451px;line-height:27px;color:#000;font-size:20.4px;letter-spacing:-1.069px;left:1387.00px;">OK</span>
<span class="t" style="top:1451px;line-height:27px;color:#000;font-size:20.4px;letter-spacing:-0.217px;left:1528.90px;">Cancel</span>
<span class="t" style="top:1451px;line-height:27px;color:#000;font-size:20.4px;letter-spacing:0.596px;left:1692.00px;">Apply</span>
</div>
<svg style="left:0;top:0;" width="1788" height="1500"><g transform="translate(335.0 324.9) rotate(46.597)"><path d="M0 -7.7 L404.05 -7.7 L392.85 -24 L441.55 0 L392.85 24 L404.05 7.7 L0 7.7 A7.7 7.7 0 0 1 0 -7.7 Z" fill="#fa1409"/></g><rect x="666" y="647.2" width="402.7" height="97.3" rx="0.8" fill="none" stroke="#fa1409" stroke-width="7" stroke-linejoin="round"/></svg>
</div>
</body></html>
